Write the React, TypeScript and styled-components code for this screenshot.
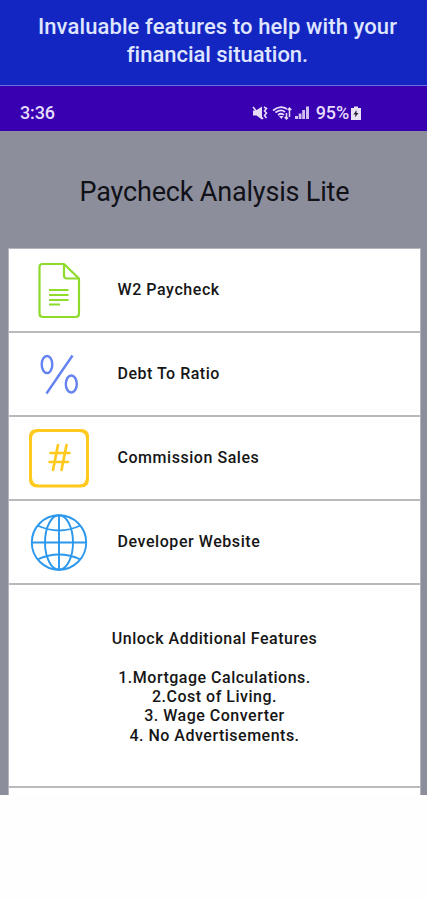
import React from 'react';
import styled, { createGlobalStyle } from 'styled-components';

const GlobalStyle = createGlobalStyle`
  * { box-sizing: border-box; }
  body { margin: 0; background: #fff; font-family: Roboto, sans-serif; }
  svg { display: block; overflow: visible; }
`;

const Screen = styled.div`
  width: 427px;
  height: 900px;
  background: #fefefe;
  overflow: hidden;
`;

const Banner = styled.header`
  height: 86px;
  padding-top: 13px;
  padding-left: 8px;
  background: #1426c2;
  border-bottom: 1px solid #6f6be0;
  color: #dfe5ff;
  display: flex;
  flex-direction: column;
  align-items: center;
`;

const BannerLine = styled.div<{ $spacing: number }>`
  font: 500 22px/28px Roboto, sans-serif;
  letter-spacing: ${(p) => p.$spacing}px;
  white-space: nowrap;
`;

const StatusBar = styled.div`
  height: 45px;
  padding: 9px 66px 0 20px;
  background: #3800b1;
  color: #e6dcfa;
  display: flex;
  justify-content: space-between;
  font: 500 18px/36px Roboto, sans-serif;
  letter-spacing: -0.15px;
`;

const StatusIcons = styled.div`
  display: flex;
  align-items: center;
  height: 36px;
`;

const IconPair = styled.div`
  display: flex;
  gap: 4px;
  margin-right: 3px;
`;

const Battery = styled.span`
  margin: 0 2px 0 6px;
`;

const AppBody = styled.main`
  height: 664px;
  padding: 0 6px 0 8px;
  background: #8d8e9c;
`;

const Title = styled.h1`
  margin: 0;
  height: 117px;
  text-align: center;
  color: #111118;
  font: 400 27px/122px Roboto, sans-serif;
  letter-spacing: -0.18px;
`;

const Card = styled.section`
  height: 547px;
  background: #fff;
  border: 1px solid #b4b4bd;
  border-bottom: 0;
`;

const Row = styled.div`
  height: 84px;
  display: flex;
  align-items: center;
  border-bottom: 2px solid #b9b9be;
`;

const IconCell = styled.div`
  width: 100px;
  display: flex;
  justify-content: center;
`;

const Label = styled.span<{ $spacing: number }>`
  margin-left: 8.5px;
  color: #161616;
  font: 500 16px/20px Roboto, sans-serif;
  letter-spacing: ${(p) => p.$spacing}px;
`;

const Unlock = styled.div`
  height: 203px;
  padding-top: 44px;
  border-bottom: 2px solid #b9b9be;
  display: flex;
  flex-direction: column;
  align-items: center;
  color: #161616;
`;

const UnlockLine = styled.div`
  font: 500 16px/19.33px Roboto, sans-serif;
  letter-spacing: 0.5px;
  min-height: 19.33px;
  white-space: pre;
`;

const DocumentIcon = () => (
  <svg width="60" height="60" viewBox="0 0 60 60" fill="none" stroke="#8edb2c" strokeWidth="2.2" strokeLinejoin="round">
    <path d="M13.5 4H35L50 18.500V53.500Q50 57 46.500 57H14Q10.500 57 10.500 53.500V7Q10.500 4 13.500 4Z" />
    <path d="M35 4V15.500Q35 18.500 38 18.500H50" />
    <path d="M20 30H39.500M20 35H39.500M20 40H39.500M20 44.500H31" />
  </svg>
);

const PercentIcon = () => (
  <svg width="60" height="60" viewBox="0 0 60 60" fill="none" stroke="#6483f0" strokeWidth="2.4">
    <ellipse cx="18" cy="20.500" rx="5.300" ry="8.500" />
    <ellipse cx="42.300" cy="40" rx="5.500" ry="8.500" />
    <path d="M43.500 11.500L17.500 49.500" />
  </svg>
);

const HashIcon = () => (
  <svg width="60" height="60" viewBox="0 0 60 60" fill="none">
    <path
      fill="#ffc91e"
      fillRule="evenodd"
      d="M8 1H52Q60 1 60 9V51Q60 59.500 52 59.500H8Q0 59.500 0 51V9Q0 1 8 1ZM10 4Q3 4 3 11V49Q3 56.500 10 56.500H50Q57 56.500 57 49V11Q57 4 50 4Z"
    />
    <path stroke="#ffc91e" strokeWidth="2.700" strokeLinecap="round" d="M29 17L24 42M37.500 17L32.500 42M21.500 25H40.500M20.500 34H39" />
  </svg>
);

const GlobeIcon = () => (
  <svg width="60" height="60" viewBox="0 0 60 60" fill="none" stroke="#2b98ee" strokeWidth="1.900">
    <circle cx="30" cy="30.500" r="27.200" />
    <path d="M30 3V58M3 30.500H57" />
    <ellipse cx="30" cy="30.500" rx="14" ry="27.200" />
    <path d="M8.500 13.500Q30 23.500 51.500 13.500M8.500 47.500Q30 37.500 51.500 47.500" />
  </svg>
);

const MuteIcon = () => (
  <svg width="16" height="16" viewBox="0 0 16 16">
    <path fill="#e6dcfa" d="M1 5.500H4L10 1.500V14.500L4.500 10.500H1Z" />
    <path fill="none" stroke="#e6dcfa" strokeWidth="1.600" d="M1 2L11 14M12 2L14.500 3.500L12.500 6L14.500 8L12.500 10.500L14.500 13" />
  </svg>
);

const WifiIcon = () => (
  <svg width="20" height="16" viewBox="0 0 20 16" fill="none" stroke="#e6dcfa">
    <path strokeWidth="1.700" d="M1 5.500Q8 -.5 15 4M3.500 7.500Q9 3.500 13 7M6 10Q9.500 7.500 12 10" />
    <path fill="#e6dcfa" stroke="none" d="M7 11L9.500 14L11.500 11Z" />
    <path strokeWidth="1.500" d="M14.500 14V8M12.700 12L14.500 14L16 12.500M17.500 3V12M15.700 5L17.500 3L19.300 5" />
  </svg>
);

const SignalIcon = () => (
  <svg width="15" height="16" viewBox="0 0 15 16" fill="#cfc0ef">
    <path d="M0 11H3V14H0ZM3.700 8.500H6.500V14H3.700ZM7.200 5H10V14H7.200ZM11 1.500H14V14H11Z" />
  </svg>
);

const BatteryIcon = () => (
  <svg width="10" height="16" viewBox="0 0 10 16">
    <path fill="#e8e2f4" d="M3 1.500H7V3H10V15H0V3H3Z" />
    <path fill="#25212c" d="M5.500 5L2.500 9.500H4.500L4 12.500L7.500 8H5.500Z" />
  </svg>
);

const rows = [
  { label: 'W2 Paycheck', spacing: 0.56, Icon: DocumentIcon },
  { label: 'Debt To Ratio', spacing: 0.5, Icon: PercentIcon },
  { label: 'Commission Sales', spacing: 0.54, Icon: HashIcon },
  { label: 'Developer Website', spacing: 0.56, Icon: GlobeIcon },
];

const features = [
  'Unlock Additional Features',
  '',
  '1.Mortgage Calculations.',
  '2.Cost of Living.',
  '3. Wage Converter',
  '4. No Advertisements.',
];

export default function App() {
  return (
    <Screen>
      <GlobalStyle />
      <Banner>
        <BannerLine $spacing={0.1}>Invaluable features to help with your</BannerLine>
        <BannerLine $spacing={-0.03}>financial situation.</BannerLine>
      </Banner>
      <StatusBar>
        <span>3:36</span>
        <StatusIcons>
          <IconPair>
            <MuteIcon />
            <WifiIcon />
          </IconPair>
          <SignalIcon />
          <Battery>95%</Battery>
          <BatteryIcon />
        </StatusIcons>
      </StatusBar>
      <AppBody>
        <Title>Paycheck Analysis Lite</Title>
        <Card>
          {rows.map(({ label, spacing, Icon }) => (
            <Row key={label}>
              <IconCell><Icon /></IconCell>
              <Label $spacing={spacing}>{label}</Label>
            </Row>
          ))}
          <Unlock>
            {features.map((text, i) => (
              <UnlockLine key={i}>{text}</UnlockLine>
            ))}
          </Unlock>
        </Card>
      </AppBody>
    </Screen>
  );
}
